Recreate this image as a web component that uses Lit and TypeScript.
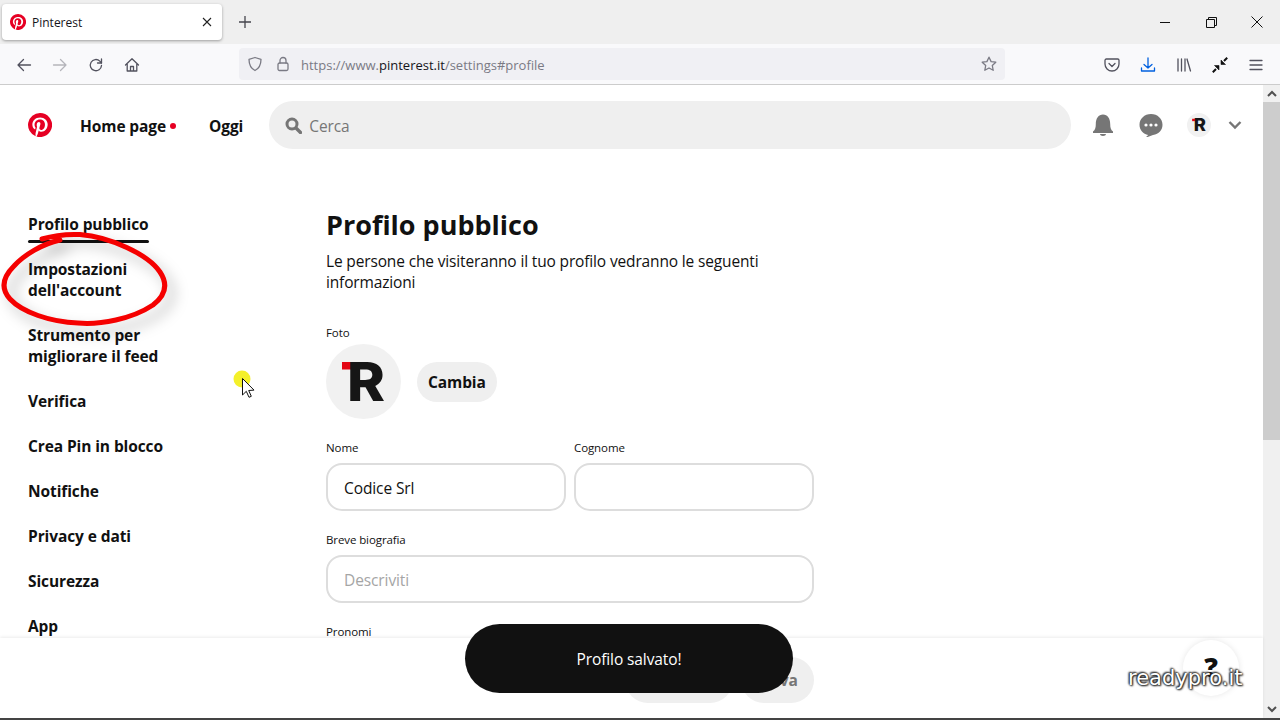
import { LitElement, html, css, svg } from "lit";
import { customElement } from "lit/decorators.js";

const PIN = "M12 0a12 12 0 0 0-4.37 23.17c-.1-.95-.2-2.4.04-3.44l1.4-5.96s-.35-.71-.35-1.78c0-1.67.97-2.91 2.17-2.91 1.02 0 1.52.77 1.52 1.68 0 1.03-.65 2.56-.99 3.98-.28 1.19.6 2.16 1.77 2.16 2.13 0 3.76-2.24 3.76-5.48 0-2.86-2.06-4.87-5-4.87-3.4 0-5.4 2.55-5.4 5.19 0 1.03.4 2.13.89 2.73.1.12.11.22.08.34l-.33 1.36c-.05.22-.18.27-.4.16-1.5-.7-2.43-2.89-2.43-4.65 0-3.78 2.75-7.26 7.92-7.26 4.16 0 7.4 2.97 7.4 6.93 0 4.14-2.6 7.46-6.22 7.46-1.21 0-2.36-.63-2.75-1.38l-.75 2.85c-.27 1.04-1 2.35-1.49 3.15A12 12 0 1 0 12 0z";

const pin = (size: number) => html`<svg width=${size} height=${size} viewBox="0 0 24 24"><circle cx="12" cy="12" r="11.5" fill="#fff"/><path fill="#e60023" d=${PIN}/></svg>`;

const tb = (body: unknown, cls = "") => html`<svg class="tbi ${cls}" width="16" height="16" viewBox="0 0 16 16" fill="none" stroke="currentColor" stroke-width="1.3" stroke-linecap="round" stroke-linejoin="round">${body}</svg>`;

const logoR = (size: number) => html`<svg width=${size} height=${size} viewBox="0 0 75 75">
  <circle cx="37.5" cy="37.5" r="37.5" fill="#f1f1f1"/>
  <rect x="16" y="18" width="9" height="7.500" fill="#e30613"/>
  <text x="21" y="57" textLength="38" lengthAdjust="spacingAndGlyphs" font-family="Inter, 'Liberation Sans', sans-serif" font-weight="800" font-size="54" fill="#161616">R</text>
</svg>`;

@customElement("app-root")
export class AppRoot extends LitElement {
  static styles = css`
    :host { display: flex; flex-direction: column; position: relative; width: 1280px; height: 720px; overflow: hidden; background: #fff; font-family: "Open Sans", "Noto Sans", sans-serif; color: #111; }
    svg { display: block; flex: none; }
    .tabbar { height: 44px; flex: none; background: #efefef; display: flex; align-items: center; padding: 0 0 0 2px; box-sizing: border-box; }
    .tab { width: 220px; height: 36px; background: #fff; border-radius: 4px; box-shadow: 0 1px 3px rgba(0,0,0,.35); display: flex; align-items: center; padding: 0 10px 0 8px; box-sizing: border-box; font-size: 12px; color: #15141a; gap: 6px; }
    .tab span { flex: 1; }
    .newtab { margin-left: 16px; color: #45454d; }
    .winctl { margin-left: auto; display: flex; color: #111; }
    .winctl div { width: 46px; height: 30px; display: flex; align-items: center; justify-content: center; }
    .toolbar { height: 41px; flex: none; background: #f9f9fb; border-bottom: 1px solid #ccc; box-sizing: border-box; display: flex; align-items: center; color: #52525e; padding: 1px 16px 0; }
    .nav { display: flex; gap: 20px; width: 223px; flex: none; }
    .disabled { color: #b5b5bb; }
    .urlbar { flex: none; width: 766px; height: 32px; margin-top: -1px; background: #f0f0f4; border-radius: 4px; display: flex; align-items: center; padding: 0 8px; box-sizing: border-box; gap: 12px; font-size: 13px; color: #7a7a84; }
    .urlbar .url { flex: 1; margin-left: -2px; padding-top: 1px; white-space: nowrap; }
    .urlbar b { font-weight: 400; color: #15141a; }
    .tools { display: flex; align-items: center; gap: 20px; margin-left: 99px; flex: none; }
    .blue { color: #0060df; }
    .page { flex: 1; display: flex; min-height: 0; }
    .content { flex: 1; min-width: 0; overflow: hidden; }
    .scroll { width: 17px; flex: none; background: #f0f0f0; display: flex; flex-direction: column; align-items: center; color: #505050; }
    .scroll .btn { height: 17px; flex: none; display: flex; align-items: center; justify-content: center; }
    .thumb { align-self: stretch; height: 338px; background: #cdcdcd; flex: none; }
    .scroll .down { margin-top: auto; margin-bottom: 2px; }
    .head { display: flex; align-items: center; height: 80px; padding: 0 16px 0 28px; box-sizing: border-box; }
    .head .link { font-weight: 700; font-size: 15.5px; letter-spacing: -.1px; padding-top: 2px; }
    .home { margin-left: 28px; display: flex; align-items: center; gap: 4px; }
    .dot { width: 6px; height: 6px; border-radius: 50%; background: #e60023; }
    .today { margin-left: 33px; }
    .search { margin-left: 26px; width: 802px; height: 48px; border-radius: 24px; background: #efefef; display: flex; align-items: center; padding-left: 16px; box-sizing: border-box; gap: 7px; color: #767676; font-size: 15.5px; letter-spacing: -.1px; }
    .search span { padding-top: 2px; }
    .hicons { display: flex; align-items: center; margin-left: 20px; color: #767676; }
    .ml24 { margin-left: 24px; }
    .ml17 { margin-left: 17px; }
    .layout { display: flex; padding: 49px 0 0 28px; }
    .side { width: 298px; flex: none; display: flex; flex-direction: column; gap: 24px; font-size: 15.5px; letter-spacing: -.1px; font-weight: 700; line-height: 21px; }
    .side a { display: block; width: 145px; }
    .side a.active { width: fit-content; position: relative; }
    .side a.active::after { content: ""; position: absolute; left: 0; right: 0; bottom: -8px; height: 3px; border-radius: 2px; background: #111; }
    .form { width: 488px; margin-top: -7px; }
    h1 { margin: 0; font-size: 27px; line-height: 36px; font-weight: 700; }
    .form p { margin: 8px 0 0; font-size: 15.5px; line-height: 21px; letter-spacing: -.15px; }
    label { display: block; font-size: 11.5px; letter-spacing: -.1px; line-height: 16px; }
    .foto { margin-top: 32px; }
    .photo { display: flex; align-items: center; gap: 16px; margin-top: 3px; }
    .pill { height: 40px; padding: 0 11px; border-radius: 20px; background: #efefef; display: flex; align-items: center; font-weight: 700; font-size: 15.5px; letter-spacing: -.1px; }
    .names { display: grid; grid-template-columns: 240px 240px; gap: 8px; margin-top: 21px; }
    .input { height: 48px; border: 2px solid #ddd; border-radius: 16px; box-sizing: border-box; padding: 2px 16px 0; display: flex; align-items: center; font-size: 15.5px; letter-spacing: -.1px; margin-top: 7px; }
    .ph { color: #a5a5a5; }
    .bio { margin-top: 21px; }
    .pron { margin-top: 21px; }
    .footer { position: absolute; left: 0; right: 17px; top: 638px; bottom: 2px; background: #fff; box-shadow: 0 -1px 3px rgba(0,0,0,.08); display: flex; justify-content: flex-end; gap: 8px; padding: 19px 449px 0 0; box-sizing: border-box; }
    .footer div { height: 46px; border-radius: 23px; background: #efefef; display: flex; align-items: center; justify-content: center; font-weight: 700; color: #767676; font-size: 15.5px; box-sizing: border-box; }
    .reset { width: 108px; }
    .save { width: 73px; }
    .toast { position: absolute; left: 465px; top: 624px; width: 328px; height: 69px; border-radius: 34.5px; background: #111; color: #fff; display: flex; align-items: center; justify-content: center; font-size: 15.5px; letter-spacing: -.1px; }
    .help { position: absolute; left: 1183px; top: 640px; width: 56px; height: 56px; border-radius: 50%; background: #fff; box-shadow: 0 0 6px rgba(0,0,0,.1); display: flex; align-items: center; justify-content: center; font-size: 27px; font-weight: 800; padding-bottom: 4px; box-sizing: border-box; }
    .mark { position: absolute; left: 1128px; top: 663px; font-family: "DejaVu Sans", sans-serif; font-size: 21px; line-height: 30px; color: #fff; text-shadow: 0 0 2px #222, 0 0 2px #222, 1px 1px 2px #222, -1px -1px 2px #222; }
    .ring { position: absolute; left: 0; top: 225px; pointer-events: none; overflow: visible; filter: drop-shadow(7px 8px 7px rgba(0,0,0,.28)); }
    .pointer { position: absolute; left: 233px; top: 369px; overflow: visible; }
    .edge { position: absolute; left: 0; right: 0; bottom: 0; height: 2px; background: #444; }
  `;

  render() {
    const nav = ["Profilo pubblico", "Impostazioni dell'account", "Strumento per migliorare il feed", "Verifica", "Crea Pin in blocco", "Notifiche", "Privacy e dati", "Sicurezza", "App"];
    return html`
      <div class="tabbar">
        <div class="tab">${pin(16)}<span>Pinterest</span>
          <svg width="10" height="10" viewBox="0 0 10 10" stroke="#222" stroke-width="1.1"><path d="M1 1l8 8M9 1l-8 8"/></svg>
        </div>
        <svg class="newtab" width="14" height="14" viewBox="0 0 14 14" stroke="currentColor" stroke-width="1.3"><path d="M7 1v12M1 7h12"/></svg>
        <div class="winctl">
          <div><svg width="11" height="11" viewBox="0 0 11 11" stroke="#111"><path d="M0 5.500h10"/></svg></div>
          <div><svg width="11" height="11" viewBox="0 0 11 11" fill="none" stroke="#111"><path d="M.5 2.500h8v8h-8zM2.500 2.500v-2h8v8h-2"/></svg></div>
          <div><svg width="12" height="12" viewBox="0 0 12 12" stroke="#111"><path d="M.5.5l11 11M11.500.5l-11 11"/></svg></div>
        </div>
      </div>
      <div class="toolbar">
        <div class="nav">
          ${tb(svg`<path d="M14.500 8H2M7.500 2.500L2 8l5.500 5.500"/>`)}
          ${tb(svg`<path d="M1.500 8H14M8.500 2.500L14 8l-5.500 5.500"/>`, "disabled")}
          ${tb(svg`<path d="M13.500 8.500a5.600 5.600 0 1 1-1.700-4.400L13.500 6"/><path d="M13.500 2v4h-4"/>`)}
          ${tb(svg`<path d="M1.500 8L8 1.800 14.500 8M3.200 7v7h9.600V7M6.500 14V9.500h3V14"/>`)}
        </div>
        <div class="urlbar">
          ${tb(svg`<path d="M8 1.500l6 1.800c0 5.500-1.500 9-6 11.200-4.500-2.200-6-5.700-6-11.200z"/>`)}
          ${tb(svg`<rect x="3" y="7" width="10" height="7.500" rx="1.500"/><path d="M5 7V4.500a3 3 0 0 1 6 0V7"/>`)}
          <div class="url">https://www.<b>pinterest.it</b>/settings#profile</div>
          ${tb(svg`<path d="M8 1.200l2.100 4.400 4.700.6-3.500 3.300.9 4.800L8 12l-4.200 2.300.9-4.800-3.500-3.300 4.700-.6z"/>`)}
        </div>
        <div class="tools">
          ${tb(svg`<path d="M2.300 2h11.400c.7 0 1.300.6 1.300 1.300V7a7 7 0 0 1-14 0V3.300C1 2.600 1.600 2 2.300 2z"/><path d="M5 6.500L8 9.500l3-3"/>`)}
          ${tb(svg`<path d="M8 1v10M4 7.500L8 11l4-3.500M1.500 11v3h13v-3"/>`, "blue")}
          ${tb(svg`<path d="M2 2v12M5.500 2v12M9 2v12M11 2l3.500 12"/>`)}
          <svg width="16" height="16" viewBox="0 0 16 16" fill="#111" stroke="#111"><path d="M2.500 8.500H7V13zM9 7.500V3l4.500 4.500z" stroke-width=".6"/><path d="M.8 15.200L4 12M15.200.8L12 4" stroke-width="2"/></svg>
          ${tb(svg`<path d="M2 3.500h12M2 8h12M2 12.500h12"/>`)}
        </div>
      </div>
      <div class="page">
        <div class="content">
          <div class="head">
            ${pin(24)}
            <div class="link home">Home page<i class="dot"></i></div>
            <div class="link today">Oggi</div>
            <div class="search">
              <svg width="17" height="17" viewBox="0 0 17 17" fill="none" stroke="#767676"><circle cx="7" cy="7" r="5" stroke-width="3"/><path d="M11 11l4.500 4.500" stroke-width="3.400" stroke-linecap="round"/></svg>
              <span>Cerca</span>
            </div>
            <div class="hicons">
              <svg width="24" height="24" viewBox="0 0 24 24" fill="currentColor"><path d="M12 23c1.600 0 3-1 3-2H9c0 1 1.400 2 3 2zM22 18.500c-2.200-1.600-2.800-4-2.800-7.500C19.200 5.500 16.500 1.500 12 1.500S4.800 5.500 4.800 11c0 3.500-.6 5.900-2.800 7.500V20h20z"/></svg>
              <svg class="ml24" width="24" height="24" viewBox="0 0 24 24"><path fill="#767676" d="M12 1C5.400 1 .5 5.800.5 11.800c0 5.200 3.700 9.400 8.700 10.300L6 25l8-3C20 21.300 23.500 17 23.500 11.800 23.500 5.800 18.600 1 12 1z"/><circle cx="7" cy="12" r="1.600" fill="#fff"/><circle cx="12" cy="12" r="1.600" fill="#fff"/><circle cx="17" cy="12" r="1.600" fill="#fff"/></svg>
              <span class="ml24">${logoR(24)}</span>
              <svg class="ml17" width="14" height="10" viewBox="0 0 14 10" fill="none" stroke="#767676" stroke-width="2.400"><path d="M1.500 2L7 7.500 12.500 2"/></svg>
            </div>
          </div>
          <div class="layout">
            <nav class="side">
              ${nav.map((n, i) => html`<a class=${i === 0 ? "active" : ""}>${n}</a>`)}
            </nav>
            <div class="form">
              <h1>Profilo pubblico</h1>
              <p>Le persone che visiteranno il tuo profilo vedranno le seguenti informazioni</p>
              <div class="foto"><label>Foto</label>
                <div class="photo">${logoR(75)}<div class="pill">Cambia</div></div>
              </div>
              <div class="names">
                <div><label>Nome</label><div class="input">Codice Srl</div></div>
                <div><label>Cognome</label><div class="input"></div></div>
              </div>
              <div class="bio"><label>Breve biografia</label><div class="input ph">Descriviti</div></div>
              <div class="pron"><label>Pronomi</label></div>
            </div>
          </div>
        </div>
        <div class="scroll">
          <div class="btn"><svg width="10" height="7" viewBox="0 0 10 7" fill="none" stroke="currentColor" stroke-width="2"><path d="M1 6l4-4 4 4"/></svg></div>
          <div class="thumb"></div>
          <div class="btn down"><svg width="10" height="7" viewBox="0 0 10 7" fill="none" stroke="currentColor" stroke-width="2"><path d="M1 1l4 4 4-4"/></svg></div>
        </div>
      </div>
      <div class="footer"><div class="reset"></div><div class="save">Salva</div></div>
      <div class="toast">Profilo salvato!</div>
      <div class="help">?</div>
      <div class="mark">readypro.it</div>
      <svg class="ring" width="180" height="110" viewBox="0 225 180 110" fill="none">
        <path d="M42 239C55 235 68 234 80 234.500C110 237 148 254 160 272C168 284 166 295 153 305C132 319 100 325 78 323C50 322 22 312 10 299C1 289 2 278 14 266C24 255 42 244 60 240" stroke="#f50000" stroke-width="5" stroke-linecap="round"/>
      </svg>
      <svg class="pointer" width="22" height="32" viewBox="0 0 22 32">
        <circle cx="9" cy="10" r="8.500" fill="#f4f02a"/>
        <path d="M9.500 9.500V26l3.800-3.700 2.700 6 2.300-1-2.600-5.800 5.300-.4z" fill="#fff" stroke="#111" stroke-width="1"/>
      </svg>
      <div class="edge"></div>
    `;
  }
}
